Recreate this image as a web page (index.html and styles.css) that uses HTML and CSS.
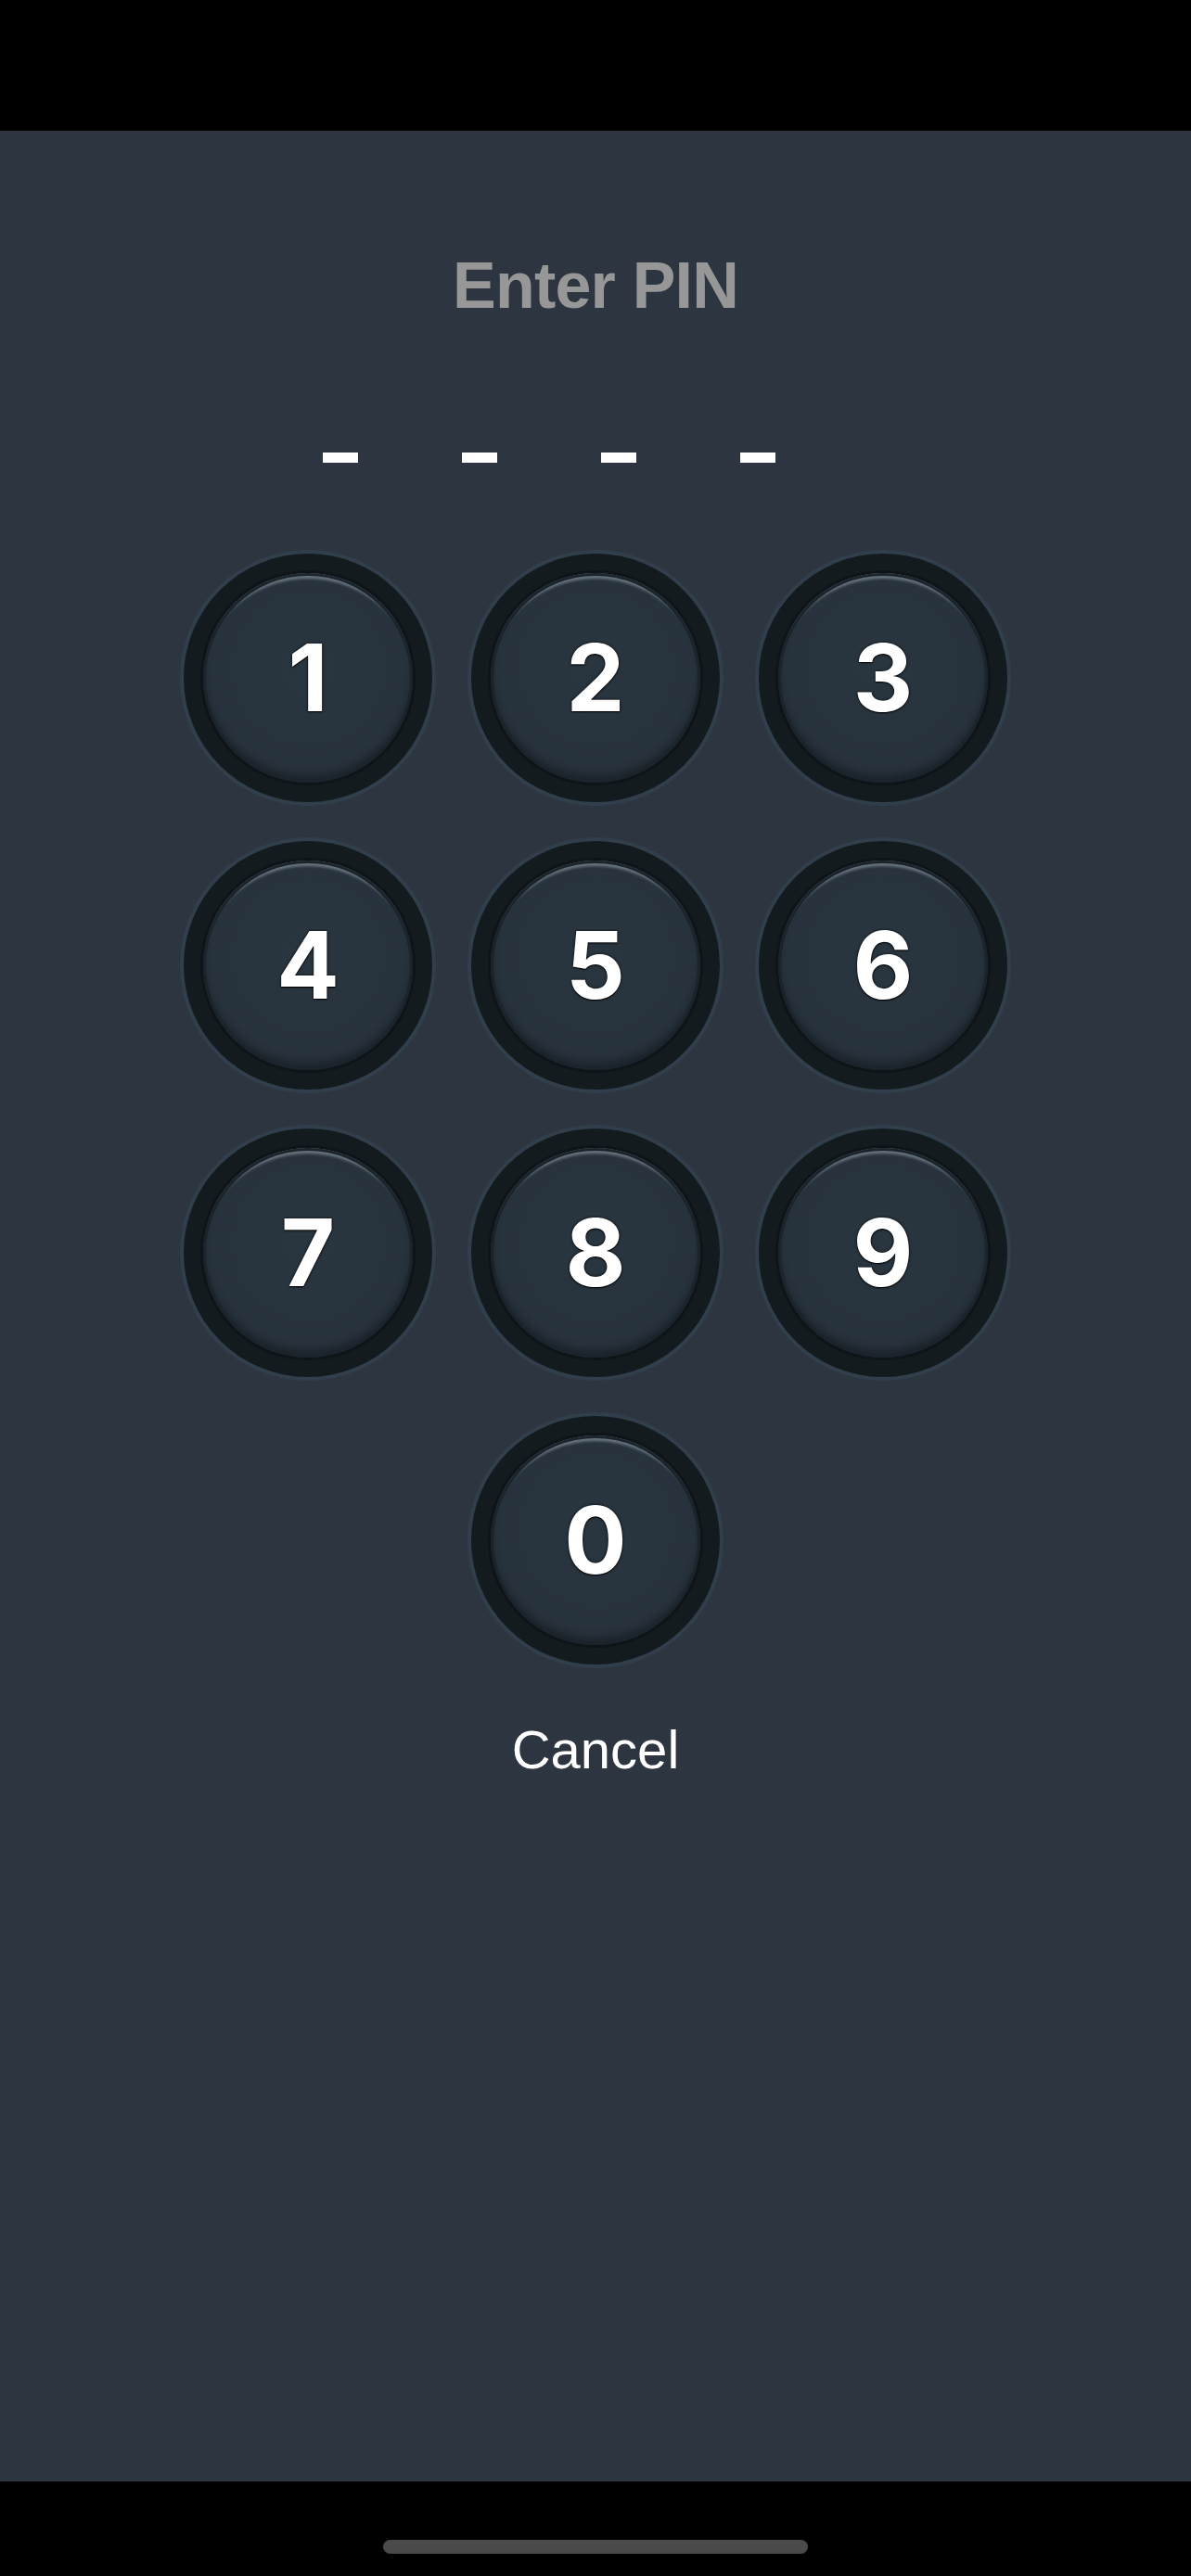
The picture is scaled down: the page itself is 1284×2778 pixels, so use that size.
FILE: index.html
```html
<!DOCTYPE html>
<html lang="en">
<head>
<meta charset="utf-8">
<title>Enter PIN</title>
<link rel="stylesheet" href="styles.css">
</head>
<body>
<div class="screen">
  <div class="status-bar"></div>
  <main class="content">
    <h1 class="title">Enter PIN</h1>
    <div class="pin">
      <span class="dash"></span>
      <span class="dash"></span>
      <span class="dash"></span>
      <span class="dash"></span>
    </div>
    <div class="keypad">
      <button class="key"><span class="face">1</span></button>
      <button class="key"><span class="face">2</span></button>
      <button class="key"><span class="face">3</span></button>
      <button class="key"><span class="face">4</span></button>
      <button class="key"><span class="face">5</span></button>
      <button class="key"><span class="face">6</span></button>
      <button class="key"><span class="face">7</span></button>
      <button class="key"><span class="face">8</span></button>
      <button class="key"><span class="face">9</span></button>
      <button class="key key-zero"><span class="face">0</span></button>
    </div>
    <div class="cancel">Cancel</div>
  </main>
  <div class="home-bar"><span class="home-indicator"></span></div>
</div>
</body>
</html>
```
FILE: styles.css
```css
html, body {
  margin: 0;
  padding: 0;
  background: #000;
}
.screen {
  width: 1284px;
  height: 2778px;
  display: flex;
  flex-direction: column;
  font-family: "Liberation Sans", Arial, sans-serif;
}
.status-bar {
  height: 141px;
  background: #000;
  flex: none;
}
.content {
  flex: 1;
  background: #2d3640;
  display: flex;
  flex-direction: column;
  align-items: center;
  padding-top: 132px;
  box-sizing: border-box;
}
.title {
  margin: 0;
  font-size: 70px;
  line-height: 70px;
  font-weight: 700;
  color: #979797;
  letter-spacing: -0.8px;
}
.pin {
  display: flex;
  gap: 112px;
  margin-top: 145px;
  padding-right: 100px;
}
.dash {
  width: 38px;
  height: 11px;
  background: #fff;
}
.keypad {
  display: grid;
  grid-template-columns: repeat(3, 268px);
  grid-auto-rows: 268px;
  gap: 42px;
  margin-top: 98px;
}
.key {
  width: 268px;
  height: 268px;
  padding: 0;
  border: none;
  border-radius: 50%;
  background: #141b1e;
  box-shadow: 0 0 0 4px rgba(52, 70, 84, 0.55);
  display: flex;
  align-items: center;
  justify-content: center;
}
.key-zero {
  grid-column: 2;
}
.face {
  width: 226px;
  height: 226px;
  border-radius: 50%;
  background: radial-gradient(circle at 50% 45%, #29353f 0%, #27323c 70%, #25303a 100%);
  box-shadow:
    0 0 0 3px #0e1417,
    inset 0 0 0 3px #1b242b,
    inset 0 11px 3px -5px rgba(150, 160, 170, 0.6),
    inset 0 -8px 8px rgba(0, 0, 0, 0.3);
  display: flex;
  align-items: center;
  justify-content: center;
  font-family: Inter, "Open Sans", sans-serif;
  font-weight: 700;
  font-size: 100px;
  line-height: 1;
  color: #fff;
  text-shadow: 0 0 3px rgba(0, 0, 0, 0.9), 0 1px 1px #000;
}
.cancel {
  margin-top: 63px;
  font-size: 58px;
  line-height: 58px;
  color: #fff;
}
.home-bar {
  height: 102px;
  background: #000;
  flex: none;
  display: flex;
  justify-content: center;
  padding-top: 63px;
  box-sizing: border-box;
}
.home-indicator {
  width: 458px;
  height: 15px;
  border-radius: 8px;
  background: #4a4a4a;
}
```
